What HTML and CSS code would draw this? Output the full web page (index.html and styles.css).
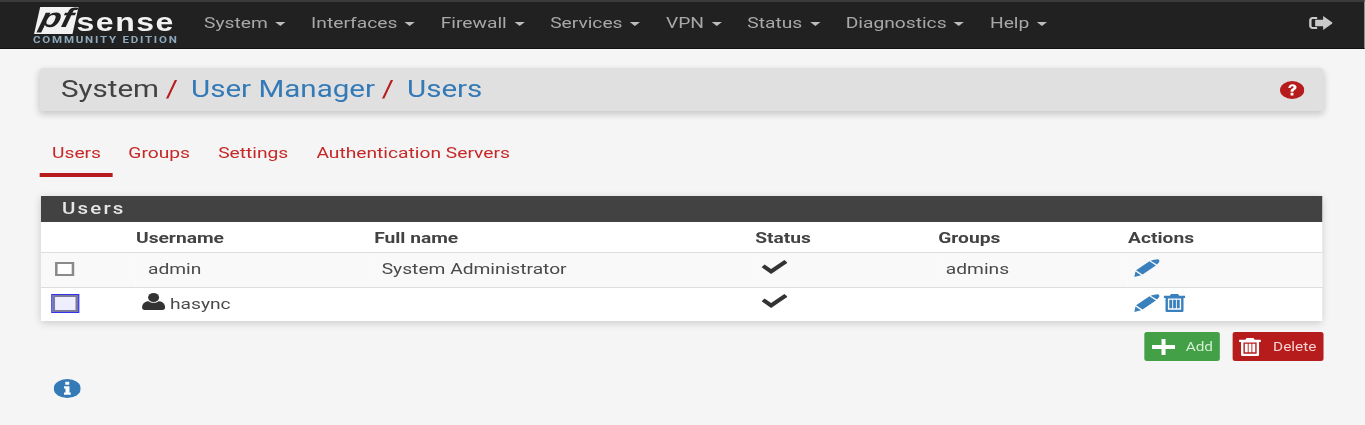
FILE: index.html
```html
<!DOCTYPE html>
<html lang="en">
<head>
<meta charset="utf-8">
<title>pfSense - System: User Manager: Users</title>
<link rel="stylesheet" href="styles.css">
</head>
<body>
<svg class="defs" width="0" height="0" aria-hidden="true">
  <symbol id="pencil" viewBox="0 0 26 18" preserveAspectRatio="none">
    <path d="M18.800 .9 23.400 .2c1.400-.2 2.600 1.600 1.800 2.900L22.900 5.600 16.600 1.700z"/>
    <path d="M15.400 2.300 21.800 6.500 8.500 15.600 2 11.300z"/>
    <path d="M1.400 12.500 7 16.300 .2 18z"/>
  </symbol>
  <symbol id="trash" viewBox="0 0 22 18" preserveAspectRatio="none">
    <path fill-rule="evenodd" d="M7.500 0h7l1.200 1.800H22V4H20v12.400c0 .9-.7 1.600-1.600 1.600H3.600C2.700 18 2 17.300 2 16.400V4H0V1.800h6.300zM4.400 4.500v11.300h13.200V4.500zM5.800 5.800h2.900v8.400H5.800zM9.600 5.800h2.800v8.400H9.600zM13.300 5.800h2.900v8.400h-2.900z"/>
  </symbol>
</svg>

<div class="sheet">
<header class="navbar">
  <a class="brand" href="#">
    <span class="brand-top">
      <span class="brand-pf"><span class="brand-pf-text">pf</span></span>
      <span class="brand-sense">sense</span>
    </span>
    <span class="brand-edition">COMMUNITY EDITION</span>
  </a>
  <nav class="menu">
    <a class="menu-item" href="#">System <i class="caret"></i></a>
    <a class="menu-item" href="#">Interfaces <i class="caret"></i></a>
    <a class="menu-item" href="#">Firewall <i class="caret"></i></a>
    <a class="menu-item" href="#">Services <i class="caret"></i></a>
    <a class="menu-item" href="#">VPN <i class="caret"></i></a>
    <a class="menu-item" href="#">Status <i class="caret"></i></a>
    <a class="menu-item" href="#">Diagnostics <i class="caret"></i></a>
    <a class="menu-item" href="#">Help <i class="caret"></i></a>
  </nav>
  <a class="logout" href="#" aria-label="Logout">
    <svg width="19.500" height="14" viewBox="0 0 25 15" preserveAspectRatio="none"><path d="M9 1H4.500C2.500 1 1 2.500 1 4.500v6C1 12.500 2.500 14 4.500 14H9v-2.200H4.800c-.8 0-1.400-.6-1.400-1.400V4.600c0-.8.6-1.400 1.400-1.400H9z"/><path d="M15 0 25 7.500 15 15v-4H7V4h8z"/></svg>
  </a>
</header>

<main class="page">
  <div class="crumbs">
    <div class="crumb-trail">
      <span class="crumb-root">System</span><span class="crumb-sep">/</span>
      <a class="crumb-link" href="#">User Manager</a><span class="crumb-sep">/</span>
      <a class="crumb-link" href="#">Users</a>
    </div>
    <a class="help" href="#" aria-label="Help">
      <svg width="19" height="18" viewBox="0 0 25 18" preserveAspectRatio="none"><ellipse cx="12.500" cy="9" rx="12.500" ry="9" fill="#b71c1c"/><path d="M8.500 7C8.800 4.500 10.500 3.200 12.800 3.200c2.500 0 4.200 1.300 4.200 3.100 0 1.500-1 2.200-2.200 2.900-.8.500-1 .8-1 1.500h-2.900c0-1.600.5-2.400 1.800-3.100.8-.5 1.200-.8 1.200-1.300 0-.6-.5-1-1.200-1-.8 0-1.300.5-1.500 1.400zM10.900 11.800h2.900v2.800h-2.900z" fill="#fff"/></svg>
    </a>
  </div>

  <ul class="tabs">
    <li class="tab tab-active"><a href="#">Users</a></li>
    <li class="tab"><a href="#">Groups</a></li>
    <li class="tab"><a href="#">Settings</a></li>
    <li class="tab"><a href="#">Authentication Servers</a></li>
  </ul>

  <section class="panel">
    <h2 class="panel-title">Users</h2>
    <table class="users">
      <colgroup>
        <col class="col-check"><col class="col-user"><col class="col-name"><col class="col-status"><col class="col-groups"><col class="col-actions">
      </colgroup>
      <thead>
        <tr><th></th><th>Username</th><th>Full name</th><th>Status</th><th>Groups</th><th>Actions</th></tr>
      </thead>
      <tbody>
        <tr class="row-odd">
          <td><span class="check"></span></td>
          <td class="cell-user">admin</td>
          <td class="cell-text">System Administrator</td>
          <td class="cell-status"><svg class="tick" width="20.300" height="14" viewBox="0 0 26 14" preserveAspectRatio="none"><path d="M9.500 14 0 7.200 3 4.500l6.500 4.400L22.800 0 26 2.700z"/></svg></td>
          <td class="cell-text">admins</td>
          <td class="cell-actions"><svg class="icon" width="20.300" height="18"><use href="#pencil"/></svg></td>
        </tr>
        <tr>
          <td><span class="check check-focus"></span></td>
          <td class="cell-person"><svg class="person" width="18" height="17" viewBox="0 0 23 17" preserveAspectRatio="none"><ellipse cx="11.500" cy="4.500" rx="5.500" ry="4.500"/><path d="M0 14.500C0 10.500 3 8.200 6.500 8.200c1.500 1 3 1.500 5 1.500s3.500-.5 5-1.500c3.500 0 6.500 2.300 6.500 6.300 0 1.500-1 2.500-2.500 2.500h-18C1 17 0 16 0 14.500z"/></svg>hasync</td>
          <td></td>
          <td class="cell-status"><svg class="tick" width="20.300" height="14" viewBox="0 0 26 14" preserveAspectRatio="none"><path d="M9.500 14 0 7.200 3 4.500l6.500 4.400L22.800 0 26 2.700z"/></svg></td>
          <td></td>
          <td class="cell-actions"><svg class="icon" width="20.300" height="18"><use href="#pencil"/></svg><svg class="icon" width="17.200" height="18"><use href="#trash"/></svg></td>
        </tr>
      </tbody>
    </table>
  </section>

  <div class="buttons">
    <a class="btn btn-add" href="#">
      <svg width="18" height="16" viewBox="0 0 23 16" preserveAspectRatio="none"><path d="M9.500 0h4v6H23v4h-9.500v6h-4v-6H0V6h9.500z"/></svg>
      Add
    </a>
    <a class="btn btn-delete" href="#">
      <svg width="17.200" height="18"><use href="#trash"/></svg>
      Delete
    </a>
  </div>

  <a class="info" href="#" aria-label="Info">
    <svg width="21.100" height="19" viewBox="0 0 27 19" preserveAspectRatio="none"><ellipse cx="13.500" cy="9.500" rx="13.500" ry="9.500" fill="#337ab7"/><path d="M11.500 2.800h4v3h-4zM10.200 7.300h5.500v6.200h1.300v2.300h-6.800v-2.300h1.500V9.600h-1.500z" fill="#fff"/></svg>
  </a>
</main>
</div>
</body>
</html>
```

FILE: styles.css
```css
* { box-sizing: border-box; }
html, body { margin: 0; padding: 0; }
body {
  height: 425px;
  overflow: hidden;
  background: #f5f5f5;
  font-family: Roboto, "Liberation Sans", sans-serif;
  font-size: 15px;
  color: #424242;
}
a { text-decoration: none; color: inherit; }
.defs { position: absolute; }

/* the reference is a soft capture widened by 1.28: the whole page is laid out at the
   narrower width and stretched once, so glyphs and icons widen together */
.sheet {
  width: 1066.4px;
  transform: scaleX(1.28);
  transform-origin: 0 0;
  filter: blur(.35px);
}

/* navbar */
.navbar {
  height: 49px;
  display: flex;
  align-items: center;
  background: #212121;
  border-top: 2px solid #3b3b3b;
  border-bottom: 1px solid #111;
  padding-left: 25.8px;
  padding-right: 25.4px;
}
.brand { width: 133.6px; display: flex; flex-direction: column; align-items: flex-start; flex: none; }
.brand-top { display: flex; align-items: flex-end; height: 28px; margin-left: 3px; }
.brand-pf {
  width: 30px;
  height: 27px;
  background: #f2f2f2;
  transform: skewX(-10deg);
  display: flex;
  align-items: center;
  justify-content: center;
}
.brand-pf-text {
  font: italic 700 27px/27px "Liberation Sans", sans-serif;
  color: #212121;
  transform: translateY(-2px);
}
.brand-sense {
  font: 700 25px/24px "Liberation Sans", sans-serif;
  color: #f2f2f2;
  letter-spacing: 1.2px;
  margin-left: 1px;
}
.brand-edition {
  font: 700 9px/9px Roboto, sans-serif;
  letter-spacing: 1.38px;
  color: #8fa9bd;
  margin-top: 2px;
  white-space: nowrap;
}
.menu { display: flex; gap: 20.2px; flex: 1; margin-bottom: 4px; }
.menu-item { color: #a8a8a8; font-size: 15px; white-space: nowrap; }
.caret {
  display: inline-block;
  width: 0; height: 0;
  margin-left: 2px;
  vertical-align: middle;
  border-top: 4px solid #bdbdbd;
  border-left: 4px solid transparent;
  border-right: 4px solid transparent;
}
.logout { display: flex; margin-bottom: 5px; }
.logout svg { fill: #c9c9c9; display: block; }

/* page */
.page { padding: 19px 32px 0 31.25px; }
.crumbs {
  height: 43px;
  background: #e0e0e0;
  border-radius: 3px;
  box-shadow: 0 3px 7px rgba(0,0,0,.2);
  display: flex;
  align-items: center;
  justify-content: space-between;
  padding: 0 15.4px 0 16.4px;
}
.crumb-trail { font-size: 23.1px; white-space: nowrap; }
.crumb-root { color: #424242; }
.crumb-sep { color: #b71c1c; margin: 0 4.5px 0 5.2px; }
.crumb-link { color: #337ab7; }
.help, .info { display: block; line-height: 0; }

/* tabs */
.tabs { list-style: none; margin: 25px 0 0; padding: 0; display: flex; }
.tab { padding: 8px 10px 0 12px; height: 41px; color: #c62828; font-size: 15px; white-space: nowrap; }
.tab-active { padding: 8px 9.4px 0 9.4px; border-bottom: 4px solid #b71c1c; }

/* panel */
.panel {
  margin: 19px 1.2px 0 .8px;
  background: #fff;
  box-shadow: 0 2px 7px rgba(0,0,0,.18);
}
.panel-title {
  margin: 0;
  height: 26px;
  background: #424242;
  color: #e6e6e6;
  font-size: 16px;
  font-weight: 500;
  letter-spacing: 1.7px;
  line-height: 26px;
  padding-left: 16.4px;
}
.users { width: 100%; border-collapse: collapse; table-layout: fixed; }
.col-check { width: 74.2px; }
.col-user { width: 186.1px; }
.col-name { width: 297.7px; }
.col-status { width: 143px; }
.col-groups { width: 148.3px; }
.users th {
  height: 30px;
  padding: 2px 0 0;
  text-align: left;
  font-size: 15px;
  font-weight: 700;
  color: #424242;
  border-bottom: 1px solid #ddd;
}
.users td {
  height: 35px;
  padding: 0 0 2px;
  font-size: 15px;
  color: #4a4a4a;
  border-bottom: 1px solid #ddd;
  vertical-align: middle;
}
.users tbody tr:last-child td { border-bottom: 0; height: 34px; }
.row-odd { background: #f9f9f9; }
.users .cell-user { padding-left: 9.4px; }
.users .cell-text { padding-left: 5.9px; }
.users .cell-status { padding-left: 4.7px; padding-bottom: 6px; }
.users .cell-actions { padding-left: 4.7px; line-height: 0; padding-bottom: 3px; }
.users .cell-person { padding-left: 4.7px; }
.check {
  display: block;
  width: 14.8px;
  height: 14px;
  margin-left: 11.2px;
  background: #fff;
  border: 2px solid #8a8a8a;
}
.check-focus {
  width: 20.300px;
  height: 17px;
  margin: 1px 0 0 8.6px;
  background: #eeeeff;
  border: 2px solid #7a7a9c;
  outline: 1px solid #3333ee;
}
.person { fill: #333; vertical-align: -1px; margin-right: 3.9px; }
.tick { fill: #333; display: block; }
.icon { fill: #3a80bd; display: inline-block; }
.icon + .icon { margin-left: 2.3px; }

/* buttons */
.buttons { display: flex; justify-content: flex-end; gap: 9.4px; margin: 11px 0 0 0; }
.btn {
  height: 29px;
  display: flex;
  align-items: center;
  border-radius: 2px;
  font-size: 12px;
  fill: #fff;
}
.btn-add { width: 58.9px; background: #43a047; padding-left: 5.5px; gap: 8.6px; color: #d6efd7; }
.btn-delete { width: 71.9px; background: #b71c1c; padding-left: 5.5px; gap: 9.4px; color: #f4d3d3; }
.btn svg { display: block; flex: none; }

/* info */
.info { margin: 18px 0 0 10.9px; width: 21.1px; }
```
